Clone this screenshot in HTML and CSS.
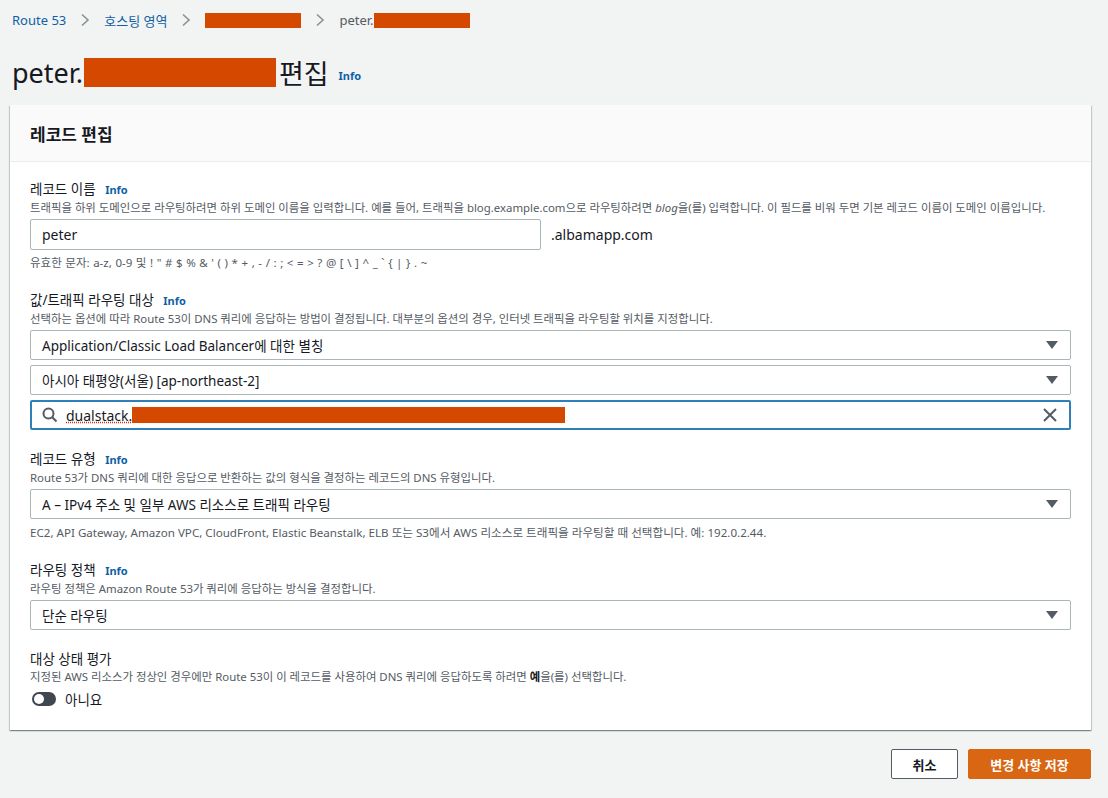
FILE: index.html
```html
<!DOCTYPE html>
<html lang="ko">
<head>
    <meta charset="UTF-8">
    <title>레코드 편집 - Route 53</title>
    <link rel="stylesheet" href="styles.css">
</head>
<body>
    <div class="page">
        <nav class="breadcrumbs">
            <a href="#" class="crumb-link">Route 53</a>
            <span class="crumb-sep">
                <svg width="10" height="14" viewBox="0 0 10 14"><path d="M2 1.5 L8 7 L2 12.5" fill="none" stroke="#879196" stroke-width="1.6"/></svg>
            </span>
            <a href="#" class="crumb-link">호스팅 영역</a>
            <span class="crumb-sep">
                <svg width="10" height="14" viewBox="0 0 10 14"><path d="M2 1.5 L8 7 L2 12.5" fill="none" stroke="#879196" stroke-width="1.6"/></svg>
            </span>
            <span class="redact crumb-redact-1"></span>
            <span class="crumb-sep">
                <svg width="10" height="14" viewBox="0 0 10 14"><path d="M2 1.5 L8 7 L2 12.5" fill="none" stroke="#879196" stroke-width="1.6"/></svg>
            </span>
            <span class="crumb-current">peter.</span><span class="redact crumb-redact-2"></span>
        </nav>

        <header class="page-title">
            <h1><span>peter.</span><span class="redact title-redact"></span><span>편집</span></h1>
            <a href="#" class="info">Info</a>
        </header>

        <section class="card">
            <div class="card-header">
                <h2>레코드 편집</h2>
            </div>
            <div class="card-body">
                <div class="field">
                    <div class="label">레코드 이름 <a href="#" class="info">Info</a></div>
                    <div class="desc">트래픽을 하위 도메인으로 라우팅하려면 하위 도메인 이름을 입력합니다. 예를 들어, 트래픽을 blog.example.com으로 라우팅하려면 <i>blog</i>을(를) 입력합니다. 이 필드를 비워 두면 기본 레코드 이름이 도메인 이름입니다.</div>
                    <div class="name-row">
                        <div class="input name-input">peter</div>
                        <span class="domain">.albamapp.com</span>
                    </div>
                    <div class="hint chars">유효한 문자: a-z, 0-9 및 ! " # $ % &amp; ' ( ) * + , - / : ; &lt; = &gt; ? @ [ \ ] ^ _ ` { | } . ~</div>
                </div>

                <div class="field">
                    <div class="label">값/트래픽 라우팅 대상 <a href="#" class="info">Info</a></div>
                    <div class="desc">선택하는 옵션에 따라 Route 53이 DNS 쿼리에 응답하는 방법이 결정됩니다. 대부분의 옵션의 경우, 인터넷 트래픽을 라우팅할 위치를 지정합니다.</div>
                    <div class="stack">
                        <div class="select">
                            <span>Application/Classic Load Balancer에 대한 별칭</span>
                            <span class="caret"></span>
                        </div>
                        <div class="select">
                            <span>아시아 태평양(서울) [ap-northeast-2]</span>
                            <span class="caret"></span>
                        </div>
                        <div class="search focused">
                            <svg class="search-icon" width="16" height="16" viewBox="0 0 16 16"><circle cx="6.5" cy="6.5" r="5" fill="none" stroke="#545b64" stroke-width="2"/><path d="M10.2 10.2 L14.5 14.5" stroke="#545b64" stroke-width="2"/></svg>
                            <span class="search-text"><span class="misspelled">dualstack.</span><span class="redact search-redact"></span></span>
                            <svg class="clear-icon" width="16" height="16" viewBox="0 0 16 16"><path d="M2 2 L14 14 M14 2 L2 14" stroke="#545b64" stroke-width="2"/></svg>
                        </div>
                    </div>
                </div>

                <div class="field">
                    <div class="label">레코드 유형 <a href="#" class="info">Info</a></div>
                    <div class="desc">Route 53가 DNS 쿼리에 대한 응답으로 반환하는 값의 형식을 결정하는 레코드의 DNS 유형입니다.</div>
                    <div class="select">
                        <span>A – IPv4 주소 및 일부 AWS 리소스로 트래픽 라우팅</span>
                        <span class="caret"></span>
                    </div>
                    <div class="hint">EC2, API Gateway, Amazon VPC, CloudFront, Elastic Beanstalk, ELB 또는 S3에서 AWS 리소스로 트래픽을 라우팅할 때 선택합니다. 예: 192.0.2.44.</div>
                </div>

                <div class="field">
                    <div class="label">라우팅 정책 <a href="#" class="info">Info</a></div>
                    <div class="desc">라우팅 정책은 Amazon Route 53가 쿼리에 응답하는 방식을 결정합니다.</div>
                    <div class="select">
                        <span>단순 라우팅</span>
                        <span class="caret"></span>
                    </div>
                </div>

                <div class="field">
                    <div class="label">대상 상태 평가</div>
                    <div class="desc">지정된 AWS 리소스가 정상인 경우에만 Route 53이 이 레코드를 사용하여 DNS 쿼리에 응답하도록 하려면 <b>예</b>을(를) 선택합니다.</div>
                    <div class="toggle-row">
                        <span class="toggle"><span class="knob"></span></span>
                        <span>아니요</span>
                    </div>
                </div>
            </div>
        </section>

        <div class="actions">
            <button class="btn btn-normal">취소</button>
            <button class="btn btn-primary">변경 사항 저장</button>
        </div>
    </div>
</body>
</html>
```

FILE: styles.css
```css
body { margin: 0; background: #f2f3f3; font-family: "Noto Sans", "Noto Sans CJK KR", sans-serif; color: #16191f; }
.page { padding: 0 17px 0 10px; }

.redact { display: inline-block; background: #d54800; }

.breadcrumbs { display: flex; align-items: center; height: 40px; padding-left: 2px; font-size: 13px; }
.crumb-link { color: #0f5fa6; text-decoration: none; }
.crumb-sep { display: flex; align-items: center; margin: 0 14px 0 14px; }
.crumb-current { color: #545b64; }
.crumb-redact-1 { width: 96px; height: 15px; }
.crumb-redact-2 { width: 96px; height: 15px; }

.page-title { display: flex; align-items: center; height: 64px; padding-left: 2px; }
.page-title h1 { margin: 0; font-size: 27px; font-weight: 400; display: flex; align-items: center; }
.title-redact { width: 192px; height: 29px; margin: 0 3px 0 1px; }
.page-title .info { margin-left: 10px; margin-top: 6px; }

.info { color: #0f5fa6; font-size: 11px; font-weight: 700; text-decoration: none; margin-left: 6px; }

.card { background: #fff; box-shadow: 0 1px 1px 0 rgba(0,28,36,.3), 1px 1px 1px 0 rgba(0,28,36,.15), -1px 1px 1px 0 rgba(0,28,36,.15); margin-top: 1px; }
.card-header { height: 56px; display: flex; align-items: center; padding: 0 20px; background: #fafafa; border-bottom: 1px solid #eaeded; }
.card-header h2 { margin: 0; font-size: 17px; font-weight: 700; }
.card-body { padding: 17px 20px 20px; display: flex; flex-direction: column; gap: 19px; }

.label { font-size: 13.5px; line-height: 20px; }
.desc { font-size: 11.4px; line-height: 16px; color: #545b64; margin-bottom: 3px; }
.desc b { color: #16191f; }
.hint { font-size: 11.6px; line-height: 16px; color: #545b64; margin-top: 6px; }
.field:first-child .hint { margin-top: 5px; }
.hint.chars { font-size: 11.5px; word-spacing: 0.6px; }

.input, .select, .search { box-sizing: border-box; height: 30px; border: 1px solid #aab7b8; border-radius: 2px; background: #fff; font-size: 13.5px; display: flex; align-items: center; padding: 0 11px; }
.name-row { display: flex; align-items: center; height: 31px; }
.name-input { width: 511px; height: 31px; font-size: 14px; }
.domain { font-size: 14px; margin-left: 10px; }

.stack { display: flex; flex-direction: column; gap: 5px; }
.select { justify-content: space-between; }
.caret { width: 0; height: 0; border-left: 6px solid transparent; border-right: 6px solid transparent; border-top: 8px solid #545b64; margin-right: 1px; }

.search.focused { border: 2px solid #2f80b8; padding: 0 10px; font-size: 14px; }
.search-icon { flex: none; }
.search-text { flex: 1; display: flex; align-items: center; margin-left: 8px; }
.misspelled { text-decoration: underline dotted #d13212; }
.search-redact { width: 433px; height: 16px; }
.clear-icon { flex: none; margin-right: 1px; }

.toggle-row { display: flex; align-items: center; gap: 9px; font-size: 13.5px; height: 22px; }
.toggle { width: 24px; height: 14px; border-radius: 7px; background: #414750; display: flex; align-items: center; padding-left: 2px; box-sizing: border-box; margin-left: 2px; }
.knob { width: 10px; height: 10px; border-radius: 50%; background: #fff; }

.actions { display: flex; justify-content: flex-end; gap: 10px; margin-top: 19px; }
.btn { height: 30px; font-family: inherit; font-size: 13px; font-weight: 700; border-radius: 2px; padding: 0 20px; }
.btn-normal { background: #fff; border: 1px solid #545b64; color: #16191f; width: 67px; }
.btn-primary { background: #d86613; border: 1px solid #d86613; color: #fff; width: 123px; }
```
